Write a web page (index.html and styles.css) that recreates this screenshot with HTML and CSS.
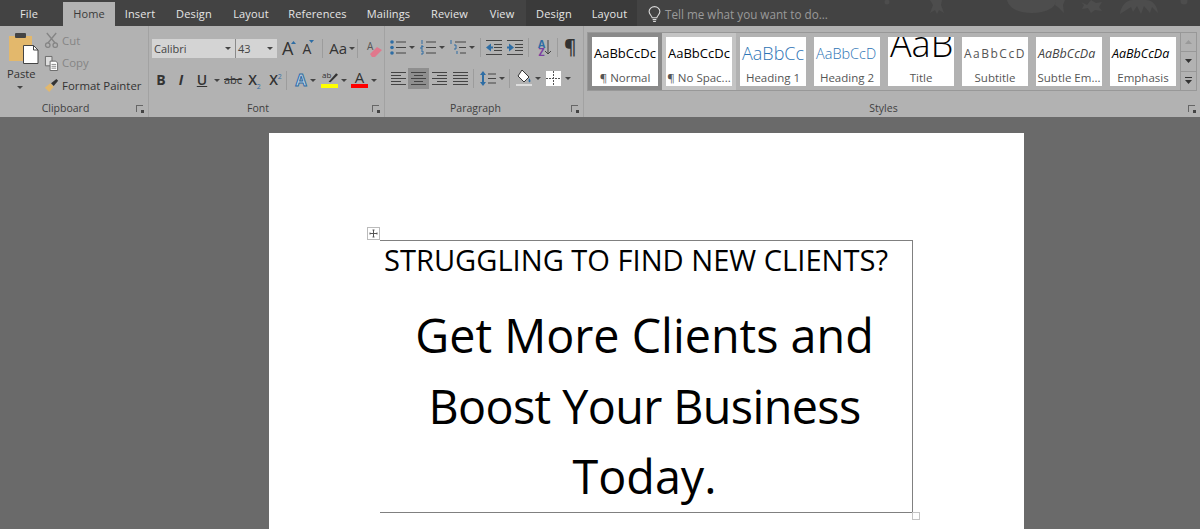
FILE: index.html
```html
<!DOCTYPE html>
<html lang="en">
<head>
    <meta charset="UTF-8">
    <title>Word</title>
    <link rel="stylesheet" href="styles.css">
</head>
<body>
    <!-- Tabs -->
    <div class="tabs">
        <span class="tab tab-file">File</span>
        <span class="tab tab-active">Home</span>
        <span class="tab tab-insert">Insert</span>
        <span class="tab tab-design">Design</span>
        <span class="tab tab-layout">Layout</span>
        <span class="tab tab-refs">References</span>
        <span class="tab tab-mail">Mailings</span>
        <span class="tab tab-review">Review</span>
        <span class="tab tab-view">View</span>
        <span class="tab tab-context tab-ctx-design">Design</span>
        <span class="tab tab-context tab-ctx-layout">Layout</span>
        <span class="tell-me">
            <svg width="13" height="17" viewBox="0 0 14 18" fill="none" stroke="#d8d8d8" stroke-width="1.2"><path d="M4.5 12.5C4 10 1.2 9 1.2 5.8a5.8 5.3 0 0 1 11.6 0C12.8 9 10 10 9.5 12.5z"/><path d="M5 14.5h4M5.500 16.500h3"/></svg>
            Tell me what you want to do...
        </span>
        <svg class="tab-art" width="340" height="26" viewBox="0 0 340 26" fill="#4d4d4d">
            <circle cx="27" cy="2" r="2.500"/>
            <path d="M70 0h12l-1 5 3 8-5-3-2 4-2-4-5 3 3-8z"/>
            <path d="M147 0h50c-2 8-11 13-25 13s-23-5-25-13z"/>
            <path d="M196 0h9l-2 5 1 8-5-5-4-3z"/>
            <path d="M221 2l6 3 4-5 5 3 6-1-3 5 3 4-7-1-4 3-3-5-6 1 2-4z"/>
            <path d="M260 14c1-8 6-14 13-14h13c7 0 11 6 12 13l-6-6-2 6-6-7-3 8-4-8-4 6-2-5z"/>
            <circle cx="324" cy="1" r="3.500"/>
        </svg>
    </div>

    <!-- Ribbon -->
    <div class="ribbon">
        <section class="group group-clipboard">
            <div class="group-body clipboard-body">
                <div class="paste">
                    <svg width="32" height="32" viewBox="0 0 32 32">
                        <rect x="2" y="4" width="23" height="25" fill="#e3b86c"/>
                        <rect x="8" y="1" width="11" height="5" rx="1" fill="#444"/>
                        <path d="M16.500 13.500h10l4.500 4.500v13.500H16.500z" fill="#fff" stroke="#444"/>
                        <path d="M26.500 13.500V18H31" fill="none" stroke="#444"/>
                    </svg>
                    <span>Paste</span>
                    <i class="caret"></i>
                </div>
                <div class="clip-list">
                    <div class="clip-row muted">
                        <svg width="15" height="16" viewBox="0 0 16 17" fill="none" stroke="#858585" stroke-width="1.4"><path d="M3 1l9 11M13 1L4 12"/><circle cx="4" cy="14" r="2.400"/><circle cx="12" cy="14" r="2.400"/></svg>
                        Cut
                    </div>
                    <div class="clip-row muted">
                        <svg width="15" height="16" viewBox="0 0 16 17" stroke="#666"><path d="M1.500 1.500h7v10h-7z" fill="#ddd"/><path d="M6.500 6.500h6l2 2v8h-8z" fill="#fff"/><path d="M8 10h5M8 12h5M8 14h5" stroke-width=".8"/></svg>
                        Copy
                    </div>
                    <div class="clip-row">
                        <svg width="15" height="15" viewBox="0 0 17 17"><path d="M1 11l6-5 4 4-5 6z" fill="#e3b86c"/><path d="M8 6l6-5 2 2-5 6z" fill="#333"/></svg>
                        Format Painter
                    </div>
                </div>
            </div>
            <div class="group-label">Clipboard <i class="launcher"></i></div>
        </section>

        <section class="group group-font">
            <div class="group-body">
                <div class="tool-row font-top">
                    <span class="combo combo-font">Calibri<i class="caret"></i></span>
                    <span class="combo combo-size">43<i class="caret"></i></span>
                    <span class="grow-btn grow-big">A<svg width="5" height="3" viewBox="0 0 5 3"><path d="M0 3l2.500-3L5 3z" fill="#2e6da4"/></svg></span>
                    <span class="grow-btn grow-small">A<svg width="5" height="3" viewBox="0 0 5 3"><path d="M0 0l2.500 3L5 0z" fill="#2e6da4"/></svg></span>
                    <span class="sep"></span>
                    <span class="case-btn">Aa<i class="caret"></i></span>
                    <span class="sep"></span>
                    <span class="clear-btn">
                        <b>A</b>
                        <svg width="12" height="10" viewBox="0 0 12 10"><path d="M0 7l7-7 5 3-7 7H2z" fill="#e0788c"/></svg>
                    </span>
                </div>
                <div class="tool-row font-bottom">
                    <span class="fmt fmt-b">B</span>
                    <span class="fmt fmt-i">I</span>
                    <span class="fmt fmt-u">U</span><i class="caret caret-u"></i>
                    <span class="fmt fmt-s">abc</span>
                    <span class="fmt fmt-x fmt-sub">X<sub>2</sub></span>
                    <span class="fmt fmt-x">X<sup>2</sup></span>
                    <span class="sep"></span>
                    <span class="fmt fmt-effect">A</span><i class="caret"></i>
                    <span class="color-btn color-mark">
                        <em>ab</em>
                        <svg width="16" height="12" viewBox="0 0 17 12"><path d="M7 11l8-9 2 1.500-8 8z" fill="#333"/></svg>
                    </span><i class="caret"></i>
                    <span class="color-btn color-font">A</span><i class="caret"></i>
                </div>
            </div>
            <div class="group-label">Font <i class="launcher"></i></div>
        </section>

        <section class="group group-para">
            <div class="group-body">
                <div class="tool-row para-top">
                    <svg width="16" height="15" viewBox="0 0 16 15"><g fill="#2e6da4"><circle cx="2" cy="2" r="1.800"/><circle cx="2" cy="7.500" r="1.800"/><circle cx="2" cy="13" r="1.800"/></g><path d="M6 2h10M6 7.500h10M6 13h10" stroke="#444"/></svg><i class="caret"></i>
                    <svg width="16" height="15" viewBox="0 0 16 15"><path d="M2 0v4M1 6h2v1H1v2h2M1 11h2v3H1" stroke="#2e6da4" fill="none"/><path d="M6 2h10M6 7.500h10M6 13h10" stroke="#444"/></svg><i class="caret"></i>
                    <svg width="16" height="15" viewBox="0 0 16 15"><path d="M1 0v4M4 5h2v4H4M7 11v3" stroke="#2e6da4" fill="none"/><path d="M5 2h11M9 7.500h7M10 13h6" stroke="#444"/></svg><i class="caret"></i>
                    <span class="sep"></span>
                    <svg width="16" height="15" viewBox="0 0 16 15"><path d="M0 .5h16M8 4.500h8M8 7.500h8M8 10.500h8M0 14.500h16" stroke="#444"/><path d="M0 7.500l5-4v3h2v2H5v3z" fill="#2e6da4"/></svg>
                    <svg width="16" height="15" viewBox="0 0 16 15"><path d="M0 .5h16M8 4.500h8M8 7.500h8M8 10.500h8M0 14.500h16" stroke="#444"/><path d="M7 7.500l-5-4v3H0v2h2v3z" fill="#2e6da4"/></svg>
                    <span class="sep"></span>
                    <span class="sort-btn"><b class="sort-a">A</b><b class="sort-z">Z</b></span>
                    <svg class="sort-arrow" width="8" height="15" viewBox="0 0 8 15"><path d="M4 0v14M1 11l3 3 3-3" fill="none" stroke="#444"/></svg>
                    <span class="sep"></span>
                    <span class="pilcrow">¶</span>
                </div>
                <div class="tool-row para-bottom">
                    <svg class="ml1" width="15" height="15" viewBox="0 0 15 15"><path d="M0 1.500h15M0 4.500h10M0 7.500h15M0 10.500h10M0 13.500h15" stroke="#444"/></svg>
                    <span class="align-on ml2"><svg width="15" height="15" viewBox="0 0 15 15"><path d="M0 1.500h15M3 4.500h9M0 7.500h15M3 10.500h9M0 13.500h15" stroke="#444"/></svg></span>
                    <svg class="ml3" width="15" height="15" viewBox="0 0 15 15"><path d="M0 1.500h15M5 4.500h10M0 7.500h15M5 10.500h10M0 13.500h15" stroke="#444"/></svg>
                    <svg class="ml6" width="15" height="15" viewBox="0 0 15 15"><path d="M0 1.500h15M0 4.500h15M0 7.500h15M0 10.500h15M0 13.500h15" stroke="#444"/></svg>
                    <span class="sep ml5"></span>
                    <svg class="ml6" width="16" height="17" viewBox="0 0 16 17"><path d="M3 1l3 4H4v7h2l-3 4-3-4h2V5H0z" fill="#2e6da4"/><path d="M8 4h8M8 8.500h8M8 13h8" stroke="#444"/></svg><i class="caret ml3"></i>
                    <span class="sep ml4"></span>
                    <svg class="ml6" width="16" height="17" viewBox="0 0 16 17"><path d="M6 0l7 7-5 5-6-6z" fill="#fff" stroke="#333"/><path d="M13 8c1.500 2 2 3 1 4s-2 0-1-4z" fill="#2e6da4"/><rect y="14" width="16" height="2" fill="#ddd"/></svg><i class="caret ml3"></i>
                    <svg class="ml5" width="15" height="15" viewBox="0 0 15 15"><rect width="15" height="15" fill="#fff"/><path d="M0 7.500h15M7.500 0v15" stroke="#555" stroke-dasharray="2 1"/></svg><i class="caret ml4"></i>
                </div>
            </div>
            <div class="group-label">Paragraph <i class="launcher"></i></div>
        </section>

        <section class="group group-styles">
            <div class="gallery">
                <div class="gallery-items">
                    <div class="style style-on"><span class="sample">AaBbCcDc</span><span class="style-name">¶ Normal</span></div>
                    <div class="style style-next"><span class="sample">AaBbCcDc</span><span class="style-name">¶ No Spac...</span></div>
                    <div class="style"><span class="sample sample-h1">AaBbCc</span><span class="style-name">Heading 1</span></div>
                    <div class="style"><span class="sample sample-h2">AaBbCcD</span><span class="style-name">Heading 2</span></div>
                    <div class="style"><span class="sample sample-title">AaB</span><span class="style-name">Title</span></div>
                    <div class="style"><span class="sample sample-sub">AaBbCcD</span><span class="style-name">Subtitle</span></div>
                    <div class="style"><span class="sample sample-em1">AaBbCcDa</span><span class="style-name">Subtle Em...</span></div>
                    <div class="style"><span class="sample sample-em2">AaBbCcDa</span><span class="style-name">Emphasis</span></div>
                </div>
                <div class="gallery-arrows">
                    <span><svg width="7" height="4" viewBox="0 0 7 4"><path d="M0 4l3.500-4L7 4z" fill="#999"/></svg></span>
                    <span><svg width="7" height="4" viewBox="0 0 7 4"><path d="M0 0l3.500 4L7 0z" fill="#333"/></svg></span>
                    <span><svg width="7" height="7" viewBox="0 0 7 7"><path d="M0 0h7v1H0zM0 3l3.500 4L7 3z" fill="#333"/></svg></span>
                </div>
            </div>
            <div class="group-label">Styles <i class="launcher"></i></div>
        </section>
    </div>

    <!-- Document -->
    <div class="workspace">
        <div class="page">
            <div class="doc-table">
                <span class="table-move"><svg width="9" height="9" viewBox="0 0 9 9"><path d="M4.500 1v7M1 4.500h7" stroke="#555"/><path d="M3.500 1h2M3.500 8h2M1 3.500v2M8 3.500v2" stroke="#555"/></svg></span>
                <p class="kicker">STRUGGLING TO FIND NEW CLIENTS?</p>
                <h1 class="headline">
                    <span class="line">Get More Clients and</span>
                    <span class="line line-tight">Boost Your Business</span>
                    <span class="line">Today.</span>
                </h1>
                <span class="table-resize"></span>
            </div>
        </div>
    </div>
</body>
</html>
```

FILE: styles.css
```css
* {
    margin: 0;
    padding: 0;
    box-sizing: border-box;
}

html, body {
    height: 100%;
    overflow: hidden;
}

body {
    background-color: #6a6a6a;
    font-family: "Open Sans", "Liberation Sans", sans-serif;
    font-size: 11px;
    color: #333;
    display: flex;
    flex-direction: column;
}

/* Tabs */
.tabs {
    position: relative;
    display: flex;
    align-items: flex-end;
    height: 26px;
    padding-top: 2px;
    background-color: #434343;
    color: #e6e6e6;
    flex-shrink: 0;
}

.tab {
    height: 24px;
    line-height: 24px;
    text-align: center;
    letter-spacing: .15px;
    white-space: nowrap;
}

.tab-file {
    width: 63px;
    padding-left: 20px;
    text-align: left;
}

.tab-active {
    width: 52px;
    background-color: #b2b2b2;
    color: #3a3a3a;
}

.tab-insert { width: 50px; }
.tab-design { width: 58px; }
.tab-layout { width: 56px; }
.tab-refs { width: 77px; }
.tab-mail { width: 65px; }
.tab-review { width: 57px; }
.tab-view { width: 48px; }
.tab-ctx-design { width: 56px; }
.tab-ctx-layout { width: 55px; }

.tab-context {
    background-color: #3a3a3a;
    height: 26px;
    line-height: 28px;
}

.tell-me {
    display: flex;
    align-items: center;
    gap: 4px;
    height: 24px;
    margin-left: 11px;
    color: #9a9a9a;
    font-size: 11.700px;
    white-space: nowrap;
}

.tab-art {
    position: absolute;
    right: 0;
    top: 0;
}

/* Ribbon */
.ribbon {
    display: flex;
    height: 91px;
    background-color: #b2b2b2;
    flex-shrink: 0;
}

.group {
    display: flex;
    flex-direction: column;
    border-right: 1px solid #a2a2a2;
    padding-top: 6px;
}

.group-body {
    height: 70px;
}

.group-clipboard {
    width: 149px;
}

.group-font {
    width: 236px;
}

.group-para {
    width: 199px;
}

.group-styles {
    flex: 1;
    border-right: 0;
    padding-left: 3px;
}

.group-label {
    position: relative;
    height: 15px;
    padding-right: 17px;
    line-height: 13px;
    text-align: center;
    font-size: 10.500px;
    color: #3f3f3f;
}

.group-styles .group-label {
    padding-right: 20px;
}

.launcher {
    position: absolute;
    right: 5px;
    top: 3px;
    width: 7px;
    height: 7px;
    border-left: 1px solid #666;
    border-top: 1px solid #666;
}

.launcher::after {
    content: "";
    position: absolute;
    right: -1px;
    bottom: -1px;
    width: 3px;
    height: 3px;
    background-color: #444;
}

.caret {
    display: inline-block;
    flex-shrink: 0;
    width: 0;
    height: 0;
    border-left: 3px solid transparent;
    border-right: 3px solid transparent;
    border-top: 3px solid #444;
}

.sep {
    width: 1px;
    height: 19px;
    background-color: #9c9c9c;
    flex-shrink: 0;
}

.tool-row {
    display: flex;
    align-items: center;
}

.ml1 { margin-left: 1px; }
.ml2 { margin-left: 2px; }
.ml3 { margin-left: 3px; }
.ml4 { margin-left: 4px; }
.ml5 { margin-left: 5px; }
.ml6 { margin-left: 6px; }

/* Clipboard */
.clipboard-body {
    display: flex;
    padding-left: 7px;
}

.paste {
    display: flex;
    flex-direction: column;
    align-items: flex-start;
    width: 37px;
    font-size: 11.200px;
    color: #333;
}

.paste span {
    margin-top: 2px;
    line-height: 16px;
}

.paste .caret {
    margin: 4px 0 0 10px;
}

.clip-list {
    display: flex;
    flex-direction: column;
    margin-top: -3px;
}

.clip-row {
    display: flex;
    align-items: center;
    gap: 3px;
    height: 22.500px;
    font-size: 11.400px;
    white-space: nowrap;
}

.muted {
    color: #858585;
}

/* Font */
.group-font .group-body {
    padding: 6px 0 0 3px;
}

.combo {
    position: relative;
    display: block;
    height: 19px;
    padding-left: 2px;
    line-height: 19px;
    background-color: #d4d4d4;
    color: #444;
    font-size: 11px;
}

.combo .caret {
    position: absolute;
    right: 4px;
    top: 8px;
}

.combo-font {
    width: 84px;
    border-right: 1px solid #8a8a8a;
}

.combo-size {
    width: 41px;
}

.grow-btn {
    display: flex;
    align-items: flex-start;
    color: #333;
}

.grow-big {
    margin-left: 5px;
    font-size: 18px;
    line-height: 19px;
}

.grow-small {
    margin: 0 8px 0 6px;
    font-size: 14px;
    line-height: 21px;
}

.grow-btn svg {
    margin: 2px 0 0 -2px;
}

.case-btn {
    display: flex;
    align-items: center;
    gap: 2px;
    padding: 0 2px 0 6px;
    font-size: 15px;
    line-height: 19px;
}

.clear-btn {
    position: relative;
    display: block;
    width: 14px;
    height: 18px;
    margin-left: 9px;
}

.clear-btn b {
    display: block;
    font-weight: 400;
    font-size: 10px;
    line-height: 12px;
    color: #555;
}

.clear-btn svg {
    position: absolute;
    left: 3px;
    top: 7px;
}

.font-bottom {
    margin-top: 11px;
    height: 20px;
}

.fmt {
    display: block;
    text-align: center;
    font-size: 14px;
    color: #333;
    line-height: 20px;
}

.fmt-b {
    width: 18px;
    font-weight: 700;
}

.fmt-i {
    width: 22px;
    font-style: italic;
    font-weight: 700;
}

.fmt-u {
    width: 20px;
    text-decoration: underline;
    font-weight: 600;
}

.caret-u {
    margin: 0 4px 0 2px;
}

.fmt-s {
    width: 18px;
    font-size: 11px;
    text-decoration: line-through;
}

.fmt-x {
    width: 21px;
    font-weight: 600;
    white-space: nowrap;
}

.fmt-sub {
    margin-left: 2px;
}

.fmt-x sub, .fmt-x sup {
    font-size: 7px;
    color: #2e6da4;
    font-weight: 400;
    line-height: 0;
}

.font-bottom .sep {
    margin-right: 7px;
}

.fmt-effect {
    width: 14px;
    font-size: 16px;
    font-weight: 700;
    color: #c2d4e6;
    -webkit-text-stroke: 1px #2e6da4;
    margin-right: 2px;
}

.color-btn {
    position: relative;
    display: block;
    align-self: flex-start;
    width: 17px;
    height: 18px;
    border-bottom: 4px solid #ffff00;
    margin-left: 5px;
    margin-right: 3px;
}

.color-mark svg {
    position: absolute;
    left: 1px;
    top: 1px;
}

.color-mark em {
    position: absolute;
    left: 1px;
    top: 0;
    font-style: normal;
    font-size: 8px;
    line-height: 9px;
}

.color-font {
    margin-left: 4px;
    border-bottom-color: #ff0000;
    text-align: center;
    font-size: 15px;
    line-height: 15px;
}

/* Paragraph */
.group-para .group-body {
    padding: 6px 0 0 5px;
}

.para-top {
    height: 19px;
}

.para-top > svg, .para-top > .sep {
    margin-left: 5px;
}

.para-top > svg:first-child {
    margin-left: 0;
}

.para-top > .caret {
    margin-left: 3px;
}

.para-top .sort-btn {
    margin-left: 8px;
}

.para-top .sort-arrow {
    margin-left: -2px;
}

.sort-btn {
    display: flex;
    flex-direction: column;
    width: 9px;
    font-size: 10.500px;
    line-height: 8px;
    text-align: center;
}

.sort-a {
    color: #2e6da4;
}

.sort-z {
    color: #7b3fa0;
}

.pilcrow {
    margin-left: 6px;
    font-size: 19px;
    line-height: 19px;
    font-weight: 600;
    color: #333;
}

.para-bottom {
    margin-top: 11px;
    height: 21px;
}

.align-on {
    display: flex;
    align-items: center;
    justify-content: center;
    width: 21px;
    height: 21px;
    background-color: #8f8f8f;
}

/* Styles gallery */
.gallery {
    display: flex;
    height: 59px;
    margin-bottom: 11px;
}

.gallery-items {
    display: flex;
    width: 593px;
    gap: 8px;
    padding: 4px 4px 0 4px;
    border: 1px solid #989898;
    border-right: 0;
}

.style {
    display: flex;
    flex-direction: column;
    align-items: center;
    width: 66px;
    height: 49px;
    background-color: #fff;
    overflow: hidden;
    white-space: nowrap;
}

.style-on {
    outline: 4px solid #8a8a8a;
}

.style-next {
    outline: 4px solid #c4c4c4;
}

.sample {
    display: block;
    align-self: flex-start;
    height: 33px;
    padding-left: 2px;
    line-height: 33px;
    font-size: 13px;
    color: #000;
}

.sample-h1 {
    font-size: 18px;
    color: #2e74b5;
    font-weight: 300;
}

.sample-h2 {
    font-size: 14.500px;
    color: #2e74b5;
    font-weight: 300;
}

.sample-title {
    font-size: 36px;
    line-height: 14px;
    font-weight: 300;
}

.sample-sub {
    font-size: 12px;
    letter-spacing: 1.500px;
    color: #555;
}

.sample-em1, .sample-em2 {
    font-style: italic;
    font-size: 12.500px;
}

.sample-em1 {
    color: #444;
}

.style-name {
    height: 16px;
    line-height: 15px;
    font-size: 11.500px;
    color: #555;
}

.gallery-arrows {
    display: flex;
    flex-direction: column;
    width: 17px;
    border: 1px solid #989898;
}

.gallery-arrows span {
    flex: 1;
    display: flex;
    align-items: center;
    justify-content: center;
    border-bottom: 1px solid #989898;
}

.gallery-arrows span:last-child {
    border-bottom: 0;
}

/* Document */
.workspace {
    flex: 1;
    padding-top: 16px;
    overflow: hidden;
}

.page {
    width: 755px;
    height: 400px;
    margin-left: 269px;
    padding: 107px 0 0 111px;
    background-color: #fff;
}

.doc-table {
    position: relative;
    width: 533px;
    height: 273px;
    border-top: 1px solid #808080;
    border-right: 1px solid #808080;
    border-bottom: 1px solid #808080;
    text-align: center;
    color: #000;
}

.table-move {
    position: absolute;
    left: -13px;
    top: -14px;
    display: flex;
    align-items: center;
    justify-content: center;
    width: 13px;
    height: 13px;
    border: 1px solid #bbb;
}

.table-resize {
    position: absolute;
    right: -8px;
    bottom: -8px;
    width: 8px;
    height: 8px;
    border: 1px solid #c4c4c4;
}

.kicker {
    padding-right: 20px;
    font-size: 29.100px;
    line-height: 38px;
    white-space: nowrap;
}

.headline {
    margin-top: 21px;
    padding-right: 3px;
    font-size: 46.700px;
    line-height: 70.500px;
    font-weight: 400;
}

.line {
    display: block;
}

.line-tight {
    letter-spacing: -.6px;
}
```
